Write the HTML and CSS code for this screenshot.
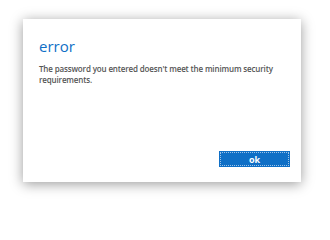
FILE: index.html
```html
<!DOCTYPE html>
<html>
<head>
<meta charset="utf-8">
<link rel="stylesheet" href="styles.css">
</head>
<body>
<div class="dialog">
  <h1 class="title">error</h1>
  <p class="msg">The password you entered doesn't meet the minimum security requirements.</p>
  <div class="actions">
    <button class="ok">ok</button>
  </div>
</div>
</body>
</html>
```
FILE: styles.css
```css
html, body {
  margin: 0;
  background: #ffffff;
}
body {
  width: 330px;
  height: 201px;
  padding: 19px 0 0 23px;
  box-sizing: border-box;
  overflow: hidden;
  font-family: "Open Sans", "Noto Sans", sans-serif;
}
.dialog {
  width: 278px;
  height: 163px;
  background: #fff;
  box-shadow: 0 2px 12px rgba(0,0,0,0.4);
  box-sizing: border-box;
  padding: 19px 11px 15px 16px;
  display: flex;
  flex-direction: column;
}
.title {
  margin: 0;
  font-size: 15px;
  line-height: 17px;
  font-weight: 400;
  color: #0f6fc6;
}
.msg {
  margin: 8px 0 0 0;
  font-size: 8px;
  line-height: 11px;
  letter-spacing: -0.15px;
  font-weight: 600;
  color: #555;
}
.actions {
  margin-top: auto;
  display: flex;
  justify-content: flex-end;
}
.ok {
  width: 71px;
  height: 16px;
  background: #0f6fc6;
  color: #fff;
  border: 1px solid #0f6fc6;
  outline: 1px dotted #9cc3e8;
  outline-offset: -2px;
  font-family: inherit;
  font-size: 9px;
  font-weight: 700;
  padding: 0;
}
```
